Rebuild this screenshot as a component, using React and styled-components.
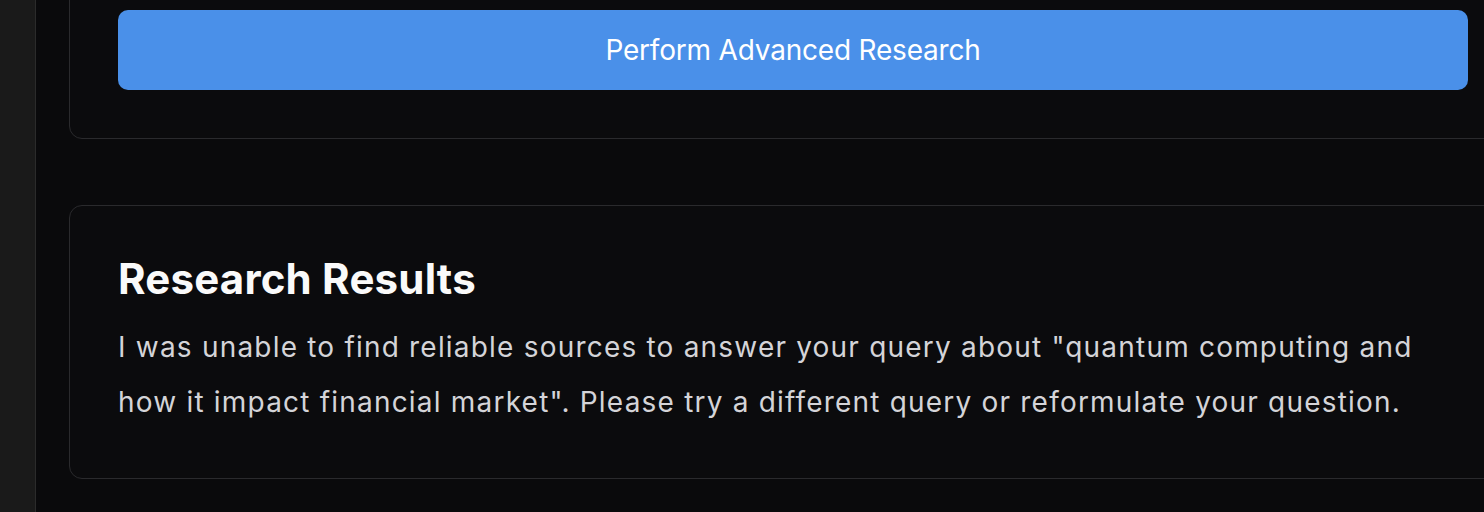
import React from "react";
import styled, { createGlobalStyle } from "styled-components";

const GlobalStyle = createGlobalStyle`
  html, body {
    margin: 0;
    padding: 0;
    background: #0a0a0c;
    overflow: hidden;
  }
  body {
    font-family: Inter, "Noto Sans", sans-serif;
    -webkit-font-smoothing: antialiased;
  }
`;

const Layout = styled.div`
  display: flex;
  height: 512px;
  background: #0a0a0c;
`;

const Sidebar = styled.aside`
  flex: 0 0 35px;
  background: #1a1a1a;
  border-right: 1px solid #2b2b2b;
`;

const Main = styled.main`
  flex: 1;
  min-width: 0;
  padding-left: 33px;
  overflow: hidden;
`;

const Column = styled.div`
  width: 1448px;
  display: flex;
  flex-direction: column;
  gap: 66px;
  margin-top: ${props => props.offset || 0}px;
`;

const Card = styled.section`
  border: 1px solid #2a2a2d;
  border-radius: 13px;
  background: #0b0b0d;
  padding: 48px;
`;

const PrimaryButton = styled.button`
  width: 100%;
  height: 80px;
  border: none;
  border-radius: 10px;
  background: #4a90e9;
  color: #ffffff;
  font-family: Inter, "Noto Sans", sans-serif;
  font-size: 28px;
  font-weight: 400;
  letter-spacing: -0.2px;
  cursor: pointer;
`;

const Title = styled.h2`
  margin: 0 0 16px;
  color: #fafafa;
  font-size: 42px;
  font-weight: 700;
  letter-spacing: 0.2px;
  line-height: 50px;
`;

const Body = styled.p`
  margin: 0;
  color: #d4d4d8;
  font-size: 28px;
  letter-spacing: 1.2px;
  line-height: 55px;
`;

export default function App() {
  return (
    <>
      <GlobalStyle />
      <Layout>
        <Sidebar />
        <Main>
          <Column offset={-39}>
            <Card>
              <PrimaryButton>Perform Advanced Research</PrimaryButton>
            </Card>
            <Card>
              <Title>Research Results</Title>
              <Body>
                I was unable to find reliable sources to answer your query about "quantum computing and how it impact financial market". Please try a different query or reformulate your question.
              </Body>
            </Card>
          </Column>
        </Main>
      </Layout>
    </>
  );
}
